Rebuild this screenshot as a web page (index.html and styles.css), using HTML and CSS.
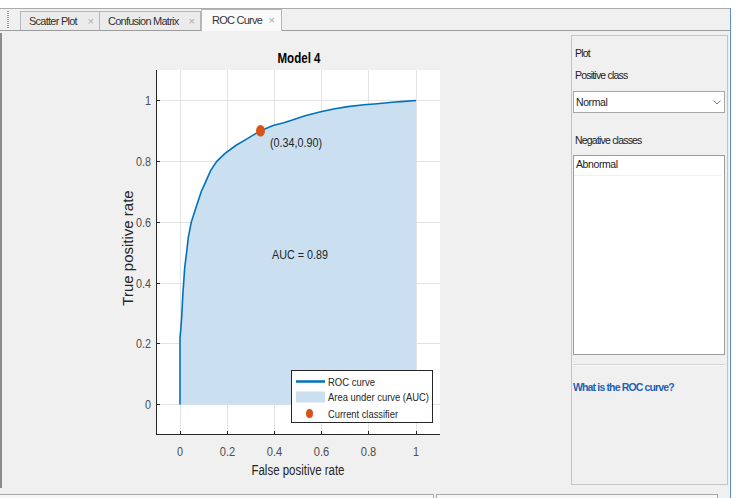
FILE: index.html
```html
<!DOCTYPE html>
<html>
<head>
<meta charset="utf-8">
<title>ROC Curve</title>
<link rel="stylesheet" href="styles.css">
</head>
<body>
<div class="window">
  <div class="tabbar">
    <div class="grip"></div>
    <div class="tab t1"><span class="lbl">Scatter Plot</span><span class="x">×</span></div>
    <div class="tab t2"><span class="lbl">Confusion Matrix</span><span class="x">×</span></div>
    <div class="tab t3 active"><span class="lbl">ROC Curve</span><span class="x">×</span></div>
  </div>
  <div class="content">
    <div class="plot-pane">
      <svg class="chart" width="566" height="455" viewBox="2 33 566 455" xmlns="http://www.w3.org/2000/svg">
        <rect class="axes-bg" x="156" y="70" width="284" height="365"/>
        <g class="grid">
          <line x1="180.5" y1="70" x2="180.5" y2="435"/>
          <line x1="227.5" y1="70" x2="227.5" y2="435"/>
          <line x1="274.5" y1="70" x2="274.5" y2="435"/>
          <line x1="321.5" y1="70" x2="321.5" y2="435"/>
          <line x1="368.5" y1="70" x2="368.5" y2="435"/>
          <line x1="416.5" y1="70" x2="416.5" y2="435"/>
          <line x1="156" y1="100.5" x2="440" y2="100.5"/>
          <line x1="156" y1="161.5" x2="440" y2="161.5"/>
          <line x1="156" y1="222.5" x2="440" y2="222.5"/>
          <line x1="156" y1="283.5" x2="440" y2="283.5"/>
          <line x1="156" y1="343.5" x2="440" y2="343.5"/>
          <line x1="156" y1="404.5" x2="440" y2="404.5"/>
        </g>
        <polygon class="auc" points="180,404.5 180,337.6 180.9,328.5 181.9,313.3 182.8,295.1 184.7,267.7 186.6,252.5 188.3,237.3 191.3,222.1 194.2,213 198.2,200.8 201.2,191.7 205.3,182.6 210.7,170.4 216.8,161.3 224.8,153.7 235.7,145.5 246.1,139.4 260.2,130.9 273,125.4 283.8,122.7 291.6,120.3 305.1,115.7 319.7,112 333.4,109 347.8,106.6 364.1,104.8 377.1,103.8 392.4,102.3 404.2,101.4 416,100.5 416,404.5"/>
        <polyline class="roc" points="180,404.5 180,337.6 180.9,328.5 181.9,313.3 182.8,295.1 184.7,267.7 186.6,252.5 188.3,237.3 191.3,222.1 194.2,213 198.2,200.8 201.2,191.7 205.3,182.6 210.7,170.4 216.8,161.3 224.8,153.7 235.7,145.5 246.1,139.4 260.2,130.9 273,125.4 283.8,122.7 291.6,120.3 305.1,115.7 319.7,112 333.4,109 347.8,106.6 364.1,104.8 377.1,103.8 392.4,102.3 404.2,101.4 416,100.5"/>
        <ellipse class="marker" cx="260.5" cy="130.8" rx="4.5" ry="5.8"/>
        <g class="axis">
          <line x1="156.5" y1="70" x2="156.5" y2="435"/>
          <line x1="156" y1="434.5" x2="440" y2="434.5"/>
          <line x1="156" y1="100.5" x2="160" y2="100.5"/>
          <line x1="156" y1="161.5" x2="160" y2="161.5"/>
          <line x1="156" y1="222.5" x2="160" y2="222.5"/>
          <line x1="156" y1="283.5" x2="160" y2="283.5"/>
          <line x1="156" y1="343.5" x2="160" y2="343.5"/>
          <line x1="156" y1="404.5" x2="160" y2="404.5"/>
          <line x1="180.5" y1="435" x2="180.5" y2="431"/>
          <line x1="227.5" y1="435" x2="227.5" y2="431"/>
          <line x1="274.5" y1="435" x2="274.5" y2="431"/>
          <line x1="321.5" y1="435" x2="321.5" y2="431"/>
          <line x1="368.5" y1="435" x2="368.5" y2="431"/>
          <line x1="416.5" y1="435" x2="416.5" y2="431"/>
        </g>
        <g class="t-tick ytick">
          <text x="151" y="100.5" textLength="6" lengthAdjust="spacingAndGlyphs">1</text>
          <text x="151" y="161.5" textLength="15" lengthAdjust="spacingAndGlyphs">0.8</text>
          <text x="151" y="222.5" textLength="15" lengthAdjust="spacingAndGlyphs">0.6</text>
          <text x="151" y="283.5" textLength="15" lengthAdjust="spacingAndGlyphs">0.4</text>
          <text x="151" y="343.5" textLength="15" lengthAdjust="spacingAndGlyphs">0.2</text>
          <text x="151" y="404.5" textLength="6" lengthAdjust="spacingAndGlyphs">0</text>
        </g>
        <g class="t-tick xtick">
          <text x="180" y="451" textLength="6" lengthAdjust="spacingAndGlyphs">0</text>
          <text x="227.5" y="451" textLength="15.5" lengthAdjust="spacingAndGlyphs">0.2</text>
          <text x="274.5" y="451" textLength="15.5" lengthAdjust="spacingAndGlyphs">0.4</text>
          <text x="321.5" y="451" textLength="15.5" lengthAdjust="spacingAndGlyphs">0.6</text>
          <text x="368.5" y="451" textLength="15.5" lengthAdjust="spacingAndGlyphs">0.8</text>
          <text x="416" y="451" textLength="6" lengthAdjust="spacingAndGlyphs">1</text>
        </g>
        <text class="t-title" x="299" y="58" textLength="43" lengthAdjust="spacingAndGlyphs">Model 4</text>
        <text class="t-xlabel" x="298" y="470" textLength="93" lengthAdjust="spacingAndGlyphs">False positive rate</text>
        <text class="t-ylabel" transform="translate(127 248) rotate(-90)" x="0" y="0">True positive rate</text>
        <text class="t-ann" x="270" y="142" textLength="52" lengthAdjust="spacingAndGlyphs">(0.34,0.90)</text>
        <text class="t-auc" x="300" y="254" textLength="56" lengthAdjust="spacingAndGlyphs">AUC = 0.89</text>
        <g class="legend">
          <rect class="leg-box" x="291.5" y="370.5" width="141" height="52"/>
          <line class="leg-line" x1="296" y1="381.5" x2="325" y2="381.5"/>
          <rect class="leg-area" x="296" y="391.5" width="29" height="11"/>
          <ellipse class="marker" cx="309.5" cy="413.5" rx="3.5" ry="4.5"/>
          <text class="t-leg" x="328" y="381.5" textLength="47" lengthAdjust="spacingAndGlyphs">ROC curve</text>
          <text class="t-leg" x="328" y="397" textLength="101" lengthAdjust="spacingAndGlyphs">Area under curve (AUC)</text>
          <text class="t-leg" x="328" y="413.5" textLength="70" lengthAdjust="spacingAndGlyphs">Current classifier</text>
        </g>
      </svg>
    </div>
    <div class="side-pane">
      <div class="sp-label l-plot">Plot</div>
      <div class="sp-label l-pos">Positive class</div>
      <div class="dropdown">
        <span>Normal</span>
        <svg class="chev" width="8" height="5" viewBox="0 0 8 5"><polyline points="0.5,0.5 4,4 7.5,0.5"/></svg>
      </div>
      <div class="sp-label l-neg">Negative classes</div>
      <div class="listbox">
        <div class="item">Abnormal</div>
      </div>
      <div class="sep"></div>
      <div class="link">What is the ROC curve?</div>
    </div>
  </div>
  <div class="bottom">
    <div class="b1"></div>
    <div class="b2"></div>
  </div>
</div>
</body>
</html>
```

FILE: styles.css
```css
* { box-sizing: border-box; }
body {
  margin: 0;
  background: #ffffff;
  font-family: "Liberation Sans", Arial, sans-serif;
  color: #222;
}
.window {
  margin-top: 8px;
  width: 731px;
  height: 490px;
  background: #f0f0f0;
  border-right: 1px solid #5b90c8;
  display: flex;
  flex-direction: column;
}
.tabbar {
  flex: none;
  height: 23px;
  border-top: 1px solid #ababab;
  border-bottom: 1px solid #9c9c9c;
  display: flex;
  align-items: flex-end;
}
.grip {
  align-self: center;
  width: 2px;
  height: 17px;
  margin-left: 7px;
  margin-right: 11px;
  background: repeating-linear-gradient(to bottom, #9a9a9a 0 1px, transparent 1px 2px);
}
.tab {
  flex: none;
  height: 19px;
  border: 1px solid #b6b6b6;
  border-bottom: none;
  background: #ebebeb;
  display: flex;
  align-items: center;
  justify-content: space-between;
  padding: 0 5px 0 8px;
  font-size: 11px;
  color: #333;
  white-space: nowrap;
}
.tab .lbl { letter-spacing: -0.75px; }
.tab .x { color: #ababab; font-size: 11px; }
.t1 { width: 80px; }
.t2 { width: 102px; margin-left: -1px; }
.t3 { width: 81px; }
.tab.active {
  height: 22px;
  margin-bottom: -1px;
  background: #fafafa;
  padding: 0 6px 1px 10px;
}
.content {
  flex: none;
  height: 463px;
  display: flex;
}
.plot-pane {
  flex: none;
  margin-top: 2px;
  width: 568px;
  height: 455px;
  border-left: 2px solid #8c8c8c;
}
.chart { display: block; }
.axes-bg { fill: #ffffff; }
.grid line { stroke: #e3e3e3; stroke-width: 1; }
.auc { fill: #cadff0; }
.roc { fill: none; stroke: #0072bd; stroke-width: 1.6; }
.marker { fill: #d95319; }
.axis line { stroke: #262626; stroke-width: 1; }
.chart text {
  font-family: "Liberation Sans", Arial, sans-serif;
  dominant-baseline: central;
}
.t-tick { font-size: 13px; fill: #4d4d4d; }
.ytick { text-anchor: end; }
.xtick { text-anchor: middle; }
.chart .t-title { font-size: 14px; font-weight: bold; fill: #000; text-anchor: middle; }
.t-xlabel { font-size: 14px; fill: #262626; text-anchor: middle; }
.chart .t-ylabel { font-size: 15px; fill: #262626; text-anchor: middle; }
.t-ann { font-size: 13px; fill: #262626; }
.t-auc { font-size: 13.5px; fill: #262626; text-anchor: middle; }
.leg-box { fill: #ffffff; stroke: #262626; stroke-width: 1; }
.leg-line { stroke: #0072bd; stroke-width: 2.5; }
.leg-area { fill: #cadff0; }
.t-leg { font-size: 11.5px; fill: #262626; }

.side-pane {
  flex: none;
  margin-left: 3px;
  margin-top: 4px;
  width: 157px;
  height: 450px;
  border: 1px solid #c3c3c3;
  display: flex;
  flex-direction: column;
}
.sp-label {
  padding-left: 3px;
  line-height: 14px;
  font-size: 10.5px;
  letter-spacing: -0.8px;
  color: #222;
  white-space: nowrap;
}
.l-plot { margin-top: 10px; }
.l-pos { margin-top: 8px; }
.l-neg { margin-top: 20px; }
.dropdown {
  margin: 9px 0 0 1px;
  width: 152px;
  height: 22px;
  border: 1px solid #a8a8a8;
  background: #fff;
  display: flex;
  align-items: center;
  justify-content: space-between;
  padding: 0 3px 0 2px;
  font-size: 10.5px;
  letter-spacing: -0.4px;
}
.chev polyline { fill: none; stroke: #777; stroke-width: 1; }
.listbox {
  margin: 8px 0 0 1px;
  width: 152px;
  height: 200px;
  border: 1px solid #9c9c9c;
  background: #fff;
  padding-right: 3px;
}
.item {
  height: 20px;
  line-height: 17px;
  padding-left: 2px;
  font-size: 10.5px;
  letter-spacing: -0.4px;
  border-bottom: 1px solid #efefef;
}
.sep {
  margin: 9px 0 0 1px;
  width: 152px;
  height: 2px;
  border-top: 1px solid #d5d5d5;
  border-bottom: 1px solid #fbfbfb;
}
.link {
  margin-top: 14px;
  padding-left: 1px;
  line-height: 14px;
  font-size: 10.5px;
  font-weight: bold;
  letter-spacing: -0.85px;
  color: #1f62b4;
  white-space: nowrap;
}
.bottom {
  flex: none;
  height: 4px;
  display: flex;
}
.b1 {
  width: 434px;
  border-top: 1px solid #a6a6a6;
  border-right: 1px solid #a6a6a6;
  background: #f7f7f7;
}
.b2 {
  margin-left: 2px;
  width: 282px;
  border: 1px solid #a6a6a6;
  border-bottom: none;
  background: #f7f7f7;
}
```
